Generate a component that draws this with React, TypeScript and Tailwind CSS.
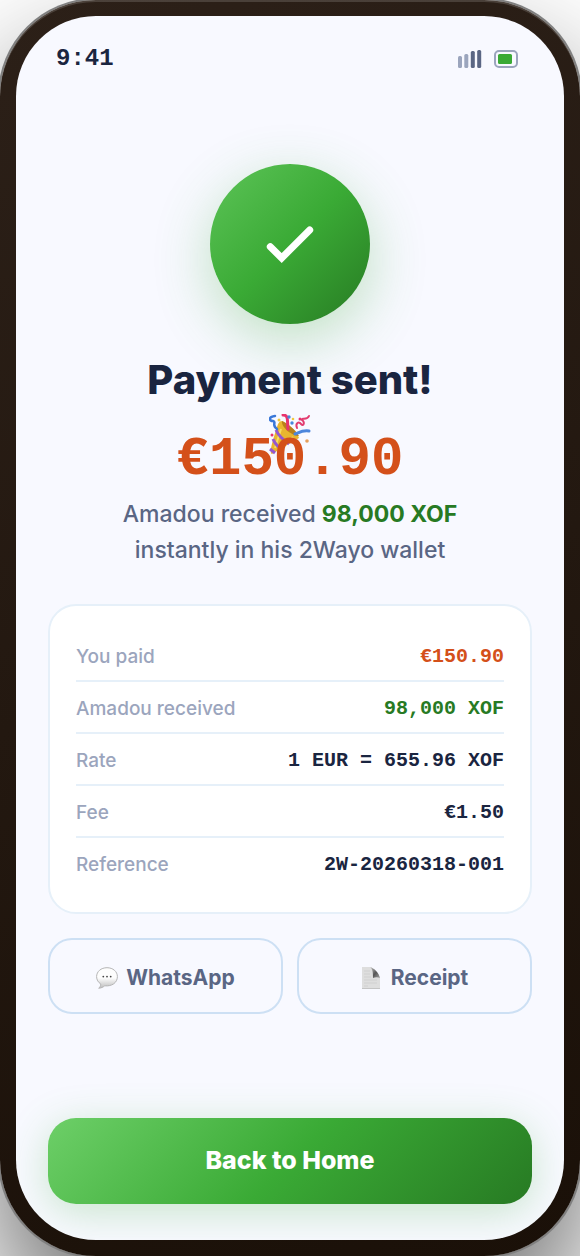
//Success screen shown after a money transfer has gone through.
import React from 'react';

interface DetailRow {
  label: string;
  value: string;
  color: string;
}

const details: DetailRow[] = [
  { label: 'You paid', value: '€150.90', color: 'text-[#d4501a]' },
  { label: 'Amadou received', value: '98,000 XOF', color: 'text-[#277a23]' },
  { label: 'Rate', value: '1 EUR = 655.96 XOF', color: 'text-[#1a2540]' },
  { label: 'Fee', value: '€1.50', color: 'text-[#1a2540]' },
  { label: 'Reference', value: '2W-20260318-001', color: 'text-[#1a2540]' },
];

const SignalIcon = () => (
  <svg width="24" height="18" viewBox="0 0 24 18" aria-hidden="true">
    <rect x="0" y="6" width="4" height="12" rx="1.5" fill="#9ba5bd" />
    <rect x="6.3" y="4" width="4" height="14" rx="1.5" fill="#9ba5bd" />
    <rect x="12.8" y="1" width="4" height="17" rx="1.5" fill="#5a6684" />
    <rect x="19.2" y="0" width="4" height="18" rx="1.5" fill="#5a6684" />
  </svg>
);

const BatteryIcon = () => (
  <svg width="24" height="18" viewBox="0 0 24 18" aria-hidden="true">
    <rect x="1" y="1" width="22" height="16" rx="4" fill="none" stroke="#9ba5bd" strokeWidth="2" />
    <rect x="4" y="4" width="14" height="10" rx="1.5" fill="#3aaa35" />
  </svg>
);

const CheckIcon = () => (
  <svg width="56" height="56" viewBox="0 0 56 56" fill="none" aria-hidden="true">
    <path d="M8.3 30.8L19.7 42L47.7 14" stroke="#fff" strokeWidth="7" strokeLinecap="round" />
  </svg>
);

const PartyIcon = () => (
  <svg width="42" height="42" viewBox="0 0 42 42" fill="none" aria-hidden="true">
    <path d="M13 7C18 9 28 17 30 24L3 40C-1 39 6 20 8 13C9 10 10 7 13 7Z" fill="#e9b62f" />
    <path d="M13 7C18 9 26 15 30 22C24 22 12 14 13 7Z" fill="#b9801c" />
    <path d="M12 15L6 34M24 23L15 32" stroke="#f8dc62" strokeWidth="2" />
    <path d="M7 16C9 21 13 25 20 30M4 25C6 30 9 33 13 35M1 35L6 39" stroke="#9457cf" strokeWidth="3" />
    <path d="M14 1C20 1 18 7 19 15" stroke="#e8336d" strokeWidth="3" strokeLinecap="round" />
    <path d="M6 2C-1 3 0 7 4 7C8 8 2 11 8 15" stroke="#3977d8" strokeWidth="2.5" strokeLinecap="round" />
    <path d="M28 14C26 9 30 7 32 10C35 13 36 8 33 6C32 3 38 7 40 2" stroke="#e23d70" strokeWidth="2" strokeLinecap="round" />
    <path d="M26 20C31 18 34 16 40 17" stroke="#4c86dc" strokeWidth="3" strokeLinecap="round" />
    <circle cx="20" cy="3" r="1.7" fill="#4687dc" />
    <circle cx="23" cy="9" r="1.7" fill="#4687dc" />
    <circle cx="31" cy="5" r="1.5" fill="#e8336d" />
    <circle cx="10" cy="6" r="1.5" fill="#f1c93b" />
    <circle cx="24" cy="5" r="1.3" fill="#f1c93b" />
    <circle cx="3" cy="21" r="1.5" fill="#e8336d" />
    <circle cx="38" cy="27" r="1.8" fill="#e6a05c" />
  </svg>
);

const ChatIcon = () => (
  <svg width="22" height="22" viewBox="0 0 22 22" aria-hidden="true">
    <defs>
      <linearGradient id="bubble" x1="0" y1="0" x2="0" y2="1">
        <stop offset="0.5" stopColor="#fdfdfd" />
        <stop offset="1" stopColor="#bdbdbd" />
      </linearGradient>
    </defs>
    <path
      d="M11 0.7C5 0.7 0.6 4.6 0.6 9.6C0.6 12.8 2.2 15.4 4.8 17C4.8 18.8 4 20.2 2.7 21.2C5 21.2 7.4 20 8.7 18.8C16 19.6 21.4 15.6 21.4 9.6C21.4 4.6 17 0.7 11 0.7Z"
      fill="url(#bubble)"
      stroke="#b5b5b5"
      strokeWidth="1"
    />
    <circle cx="7.3" cy="9.6" r="0.9" fill="#444" />
    <circle cx="11" cy="9.6" r="0.9" fill="#444" />
    <circle cx="14.7" cy="9.6" r="0.9" fill="#444" />
  </svg>
);

const PageIcon = () => (
  <svg width="22" height="22" viewBox="0 0 22 22" aria-hidden="true">
    <defs>
      <linearGradient id="fold" x1="0" y1="0" x2="1" y2="1">
        <stop offset="0" stopColor="#c9c9c9" />
        <stop offset="0.55" stopColor="#555" />
        <stop offset="1" stopColor="#a5a5a5" />
      </linearGradient>
    </defs>
    <path d="M1 0H9C12 1 18 6 19 11V22H1Z" fill="#dedede" />
    <path d="M9 0C13 1 18 6 19 11C17 10 14 10 12 11C12 7 12 2 9 0Z" fill="url(#fold)" />
    <path d="M3 4H9M3 7H9M3 10H10M3 13H16M3 16H16M3 19H7" stroke="#d0d0d0" strokeWidth="1" />
    <path d="M1 21.5H19" stroke="#c4c4c4" />
  </svg>
);

const StatusBar = () => (
  <header className="flex items-center justify-between pl-10 pr-[46px] pt-[25px]">
    <span className="font-['Liberation_Mono',monospace] text-2xl leading-9 font-bold">9:41</span>
    <div className="flex items-center gap-3">
      <SignalIcon />
      <BatteryIcon />
    </div>
  </header>
);

const App: React.FC = () => {
  return (
    <div className="min-h-screen flex overflow-hidden bg-white font-['Inter',sans-serif]">
      <div className="flex-1 flex rounded-[96px] p-4 bg-linear-[160deg,#2c2018,#1a1008] shadow-[0_0_0_2px_#808080,0_64px_128px_rgba(0,0,0,0.6),inset_0_2px_0_rgba(255,255,255,0.15)]">
        <div className="flex-1 flex flex-col rounded-[80px] overflow-hidden bg-[#f8f9ff] text-[#1a2540]">
          <StatusBar />

          <main className="flex-1 flex flex-col px-8 pt-[87px] pb-9">
            <div className="self-center w-40 h-40 rounded-full flex items-center justify-center bg-linear-[135deg,#5dc458,#3aaa35_50%,#277a23] shadow-[0_16px_56px_rgba(58,170,53,0.3)]">
              <CheckIcon />
            </div>

            <div className="relative mt-8 text-center">
              <h1 className="text-[40px] leading-12 font-extrabold">Payment sent!</h1>
              <span className="absolute left-1/2 top-14 -translate-x-1/2 mt-0.5">
                <PartyIcon />
              </span>
              <p className="relative mt-6 font-['Liberation_Mono',monospace] text-[54px] leading-16 font-bold text-[#d4501a]">
                €150.90
              </p>
            </div>

            <p className="mt-1 text-center text-[23px] leading-9 font-medium text-[#5a6684]">
              Amadou received <strong className="font-bold text-[#277a23]">98,000 XOF</strong>
              <br />
              instantly in his 2Wayo wallet
            </p>

            <dl className="mt-9 rounded-[28px] border-2 border-[#e6f0f9] bg-white px-[26px] py-6">
              {details.map((row) => (
                <div
                  key={row.label}
                  className="flex items-center justify-between pt-3 pb-2 border-b-2 border-[#e6f0f9] last:border-b-0"
                >
                  <dt className="text-[19px] leading-[30px] font-medium text-[#9ba5bd]">{row.label}</dt>
                  <dd
                    className={`font-['Liberation_Mono',monospace] text-xl leading-[30px] font-bold ${row.color}`}
                  >
                    {row.value}
                  </dd>
                </div>
              ))}
            </dl>

            <div className="mt-6 flex gap-3.5 text-[21px] font-bold text-[#5a6684]">
              <button
                type="button"
                className="flex-1 h-[76px] pt-1 flex items-center justify-center gap-2 rounded-3xl border-2 border-[#cde0f4]"
              >
                <ChatIcon />
                WhatsApp
              </button>
              <button
                type="button"
                className="flex-1 h-[76px] pt-1 flex items-center justify-center gap-2 rounded-3xl border-2 border-[#cde0f4]"
              >
                <PageIcon />
                Receipt
              </button>
            </div>

            <button
              type="button"
              className="mt-auto h-[86px] rounded-[28px] text-[25px] font-extrabold text-white bg-linear-[135deg,#6dcf68,#3aaa35_50%,#277a23] shadow-[0_8px_40px_rgba(58,170,53,0.25)]"
            >
              Back to Home
            </button>
          </main>
        </div>
      </div>
    </div>
  );
};

export default App;
